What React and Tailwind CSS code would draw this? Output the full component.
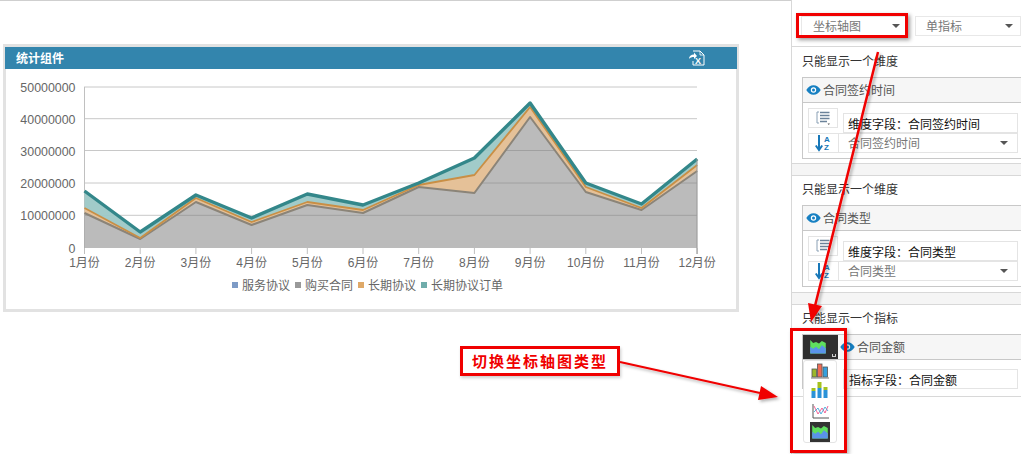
import React from "react";

const FONT = "[font-family:'Noto_Sans_CJK_SC','Liberation_Sans',sans-serif]";
const OX = 6;
const OY = 69;
const X = (i) => 84.5 - OX + i * 55.7;
const gray = [213, 239, 202, 225, 205, 213, 187, 193, 117, 192, 210, 171];
const orange = [208, 238, 198, 222, 202, 210, 185, 175, 107, 187, 208, 165];
const teal = [191, 232, 195, 218, 194, 205, 183, 158, 103, 183, 204, 159];
const pts = (a) => a.map((y, i) => `${X(i)},${y - OY}`).join(" ");
const area = (top, bottom) =>
  pts(top) + " " + [...bottom].reverse().map((y, i) => `${X(11 - i)},${y - OY}`).join(" ");
const base = gray.map(() => 248);
const ticks = ["50000000", "40000000", "30000000", "20000000", "10000000", "0"];
const tickY = [87, 118.7, 150.5, 183, 215.3, 248];
const months = ["1月份", "2月份", "3月份", "4月份", "5月份", "6月份", "7月份", "8月份", "9月份", "10月份", "11月份", "12月份"];

function Chart() {
  return (
    <svg width="730" height="207" className="block">
      {tickY.slice(0, 5).map((y) => (
        <line key={y} x1={84 - OX} x2={697 - OX} y1={y - OY} y2={y - OY} stroke="#c8c8c8" strokeWidth="1" />
      ))}
      <line x1={84.5 - OX} x2={84.5 - OX} y1={87 - OY} y2={248 - OY} stroke="#c0c0c0" />
      {months.map((m, i) => (
        <line key={m} x1={X(i)} x2={X(i)} y1={248 - OY} y2={254 - OY} stroke="#c0c0c0" />
      ))}
      <polygon points={area(teal, orange)} fill="#9cc8c6" fillOpacity="0.95" />
      <polygon points={area(orange, gray)} fill="#e5c198" />
      <polygon points={area(gray, base)} fill="#777" fillOpacity="0.5" />
      <polyline points={pts(gray)} fill="none" stroke="#8b8478" strokeWidth="2" strokeLinejoin="round" />
      <polyline points={pts(orange)} fill="none" stroke="#c98f45" strokeWidth="1.8" strokeLinejoin="round" />
      <polyline points={pts(teal)} fill="none" stroke="#33878a" strokeWidth="3.4" strokeLinejoin="round" />
      <line x1={697 - OX} x2={697 - OX} y1={159 - OY} y2={254 - OY} stroke="#999" />
      {tickY.map((y, i) => (
        <text key={y} x={75.5 - OX} y={y - OY + 5} textAnchor="end" fontSize="12.4" fill="#666" fontFamily="'Liberation Sans',sans-serif">
          {ticks[i]}
        </text>
      ))}
      {months.map((m, i) => (
        <text key={m} x={X(i)} y={267 - OY} textAnchor="middle" fontSize="12" fill="#666" fontFamily="'Liberation Sans','Noto Sans CJK SC',sans-serif">
          {m}
        </text>
      ))}
    </svg>
  );
}

function LegendItem({ color, label }) {
  return (
    <span className="flex items-center gap-[4px]">
      <span className="w-[6px] h-[6px]" style={{ backgroundColor: color }} />
      <span>{label}</span>
    </span>
  );
}

function Caret({ className = "" }) {
  return <span className={`w-0 h-0 border-x-[4px] border-x-transparent border-t-[4px] border-t-[#555] ${className}`} />;
}

function Eye() {
  return (
    <svg width="15" height="10" viewBox="0 0 15 10" className="shrink-0">
      <path d="M0.3 5C2 2 4.5 0.3 7.5 0.3S13 2 14.7 5C13 8 10.500 9.700 7.500 9.700S2 8 0.300 5Z" fill="#1780c2" />
      <circle cx="7.500" cy="5" r="2.700" fill="#fff" />
      <circle cx="7.500" cy="5" r="1.500" fill="#1780c2" />
    </svg>
  );
}

function ListIcon() {
  return (
    <svg width="15" height="14" viewBox="0 0 15 14">
      <path d="M3 1H1V12H3" fill="none" stroke="#8aa0b5" strokeWidth="1" />
      <path d="M4 1.500H13.500M4 4.500H13.500M4 7.500H13.500M4 10.500H11" stroke="#6b8299" strokeWidth="1.300" />
      <path d="M11.500 12.500H14L12.750 14Z" fill="#555" />
    </svg>
  );
}

function SortIcon() {
  return (
    <svg width="17" height="18" viewBox="0 0 17 18">
      <path d="M4 1V15M0.800 11.500L4 16L7.200 11.500" fill="none" stroke="#1878b8" strokeWidth="2" />
      <text x="9" y="7.500" fontSize="8" fontWeight="700" fill="#1878b8" fontFamily="'Liberation Sans',sans-serif">A</text>
      <text x="9" y="16" fontSize="8" fontWeight="700" fill="#1878b8" fontFamily="'Liberation Sans',sans-serif">Z</text>
    </svg>
  );
}

function AreaIcon({ size = 16 }) {
  return (
    <svg width={size} height={size * 0.85} viewBox="0 0 16 14">
      <polygon points="0,0 3,3 6,2 9,3.500 12,1 16,3 16,14 0,14" fill="#5fe05f" />
      <polygon points="0,7 3,9 6,7 9,9.500 12,5.500 16,8.500 16,14 0,14" fill="#5a93ea" />
    </svg>
  );
}

function DimensionBox({ title, sortField }) {
  return (
    <div className="ml-[10px] border border-r-0 border-[#c8c8c8]">
      <div className="h-[25px] flex items-center gap-[2px] pl-[3px] bg-[#f6f6f6] border-b border-[#c8c8c8] text-[12px] text-[#555]">
        <Eye />
        <span>{title}</span>
      </div>
      <div className="pl-[5px] pr-[3px] pt-[5px] pb-[4px] h-[55px]">
        <div className="flex h-[25px]">
          <div className="w-[30px] h-[20px] border border-[#e4e4e4] flex items-center justify-center">
            <ListIcon />
          </div>
          <div className="ml-[5px] flex-1 mt-[5px] h-[20px] border border-[#e4e4e4] pl-[4px] text-[12px] leading-[19px] text-[#111]">
            维度字段：{title}
          </div>
        </div>
        <div className="flex h-[20px] border border-[#e4e4e4] items-center">
          <div className="w-[30px] h-full border-r border-[#e4e4e4] flex items-center justify-center">
            <SortIcon />
          </div>
          <span className="ml-[9px] flex-1 text-[12px] text-[#777]">{sortField}</span>
          <Caret className="mr-[9px]" />
        </div>
      </div>
    </div>
  );
}

function Strip() {
  return <div className="h-[11px] bg-[#f5f5f5] border-y border-[#d8d8d8] box-content -my-px" />;
}

function Heading({ children }) {
  return <div className="pl-[10px] pt-[5px] h-[30px] text-[12px] leading-[18px] text-[#333]">{children}</div>;
}

function Dropdown() {
  return (
    <div className="absolute left-[803px] top-[360px] w-[34px] h-[83px] bg-white border border-[#e4e4e4] rounded-[3px] flex flex-col items-center pt-[2px] gap-[3px]">
      <svg width="18" height="16" viewBox="0 0 18 16">
        <rect x="1" y="6" width="4.500" height="8" fill="#9ab82a" stroke="#555" strokeWidth="0.800" />
        <rect x="6.500" y="1" width="4.500" height="13" fill="#ef6b55" stroke="#555" strokeWidth="0.800" />
        <rect x="12" y="4" width="4.500" height="10" fill="#35a0dd" stroke="#555" strokeWidth="0.800" />
        <path d="M0 15H18" stroke="#777" strokeWidth="1" />
      </svg>
      <svg width="18" height="16" viewBox="0 0 18 16">
        <rect x="0.500" y="9" width="4" height="7" fill="#2a92d8" />
        <rect x="0.500" y="6" width="4" height="3" fill="#a5c21e" />
        <rect x="6.500" y="6" width="4" height="10" fill="#2a92d8" />
        <rect x="6.500" y="0" width="4" height="6" fill="#a5c21e" />
        <rect x="12.500" y="8" width="4" height="8" fill="#2a92d8" />
        <rect x="12.500" y="5" width="4" height="3" fill="#a5c21e" />
      </svg>
      <svg width="17" height="16" viewBox="0 0 17 16" className="mt-[2px]">
        <path d="M1 1V15H17" fill="none" stroke="#555" strokeWidth="1" />
        <path d="M2 3L6 11L10 5L13 10L16 3" fill="none" stroke="#f0528a" strokeWidth="0.900" />
        <path d="M2 9L6 5L9 11L13 4L16 8" fill="none" stroke="#45a9d8" strokeWidth="0.900" />
      </svg>
      <div className="w-[20px] h-[20px] bg-[#333] flex items-center justify-center">
        <AreaIcon size={16} />
      </div>
    </div>
  );
}

export default function App() {
  return (
    <div className={`relative w-[1021px] h-[454px] overflow-hidden bg-white flex ${FONT}`}>
      <main className="w-[791px] h-full border-t border-[#cfcfcf] pt-[43px] pl-[3px]">
        <section className="w-[736px] h-[268px] border-[3px] border-[#e2e2e2] bg-white">
          <header className="h-[22px] -mx-px flex items-center justify-between pl-[11px] pr-[32px] bg-[#3385ad] text-white text-[12px] font-bold">
            <span>统计组件</span>
            <svg width="17" height="16" viewBox="0 0 17 16">
              <path d="M5 1H12L16 5V15H5V11" fill="none" stroke="#fff" strokeWidth="1" />
              <path d="M12 1V5H16" fill="none" stroke="#fff" strokeWidth="0.800" />
              <path d="M1 9C1 6 3 4.500 6 4.500V2.500L9 6L6 9V7C4 7 2 7.500 1 9Z" fill="#fff" />
              <text x="7" y="14" fontSize="9" fontWeight="700" fill="#fff" fontFamily="'Liberation Sans',sans-serif">X</text>
            </svg>
          </header>
          <Chart />
          <div className="ml-[226px] flex gap-[5px] text-[12px] leading-[18px] text-[#666]">
            <LegendItem color="#7d9bc6" label="服务协议" />
            <LegendItem color="#999999" label="购买合同" />
            <LegendItem color="#dfa968" label="长期协议" />
            <LegendItem color="#70adab" label="长期协议订单" />
          </div>
        </section>
      </main>

      <aside className="w-[230px] h-full border-l border-[#d8d8d8] flex flex-col">
        <div className="h-[47px] border-b border-[#d8d8d8] flex items-start pt-[16px] pl-[9px] pr-0 gap-[7px]">
          <div className="w-[107px] h-[20px] flex items-center justify-between border border-[#e8e8e8] pl-[11px] pr-[7px] text-[12px] text-[#777]">
            <span>坐标轴图</span>
            <Caret />
          </div>
          <div className="flex-1 h-[20px] flex items-center justify-between border border-[#e8e8e8] pl-[10px] pr-[7px] text-[12px] text-[#777]">
            <span>单指标</span>
            <Caret />
          </div>
        </div>
        <div className="h-[117px]">
          <Heading>只能显示一个维度</Heading>
          <DimensionBox title="合同签约时间" sortField="合同签约时间" />
        </div>
        <Strip />
        <div className="h-[118px]">
          <Heading>只能显示一个维度</Heading>
          <DimensionBox title="合同类型" sortField="合同类型" />
        </div>
        <Strip />
        <div className="h-[93px] border-b border-[#d8d8d8]">
          <Heading>只能显示一个指标</Heading>
          <div className="ml-[10px] border-t border-l border-[#c8c8c8]">
            <div className="h-[25px] flex items-center bg-[#f6f6f6] border-b border-[#c8c8c8] text-[12px] text-[#555]">
              <div className="relative w-[35px] h-full bg-[#2f2f2f] flex items-center justify-center pr-[6px]">
                <AreaIcon size={16} />
                <span className="absolute right-[2px] bottom-[2px] w-[4px] h-[3px] border-b border-x border-[#ccc]" />
              </div>
              <span className="ml-[2px]"><Eye /></span>
              <span className="ml-[2px]">合同金额</span>
            </div>
            <div className="pt-[9px] pl-[40px] pr-[3px]">
              <div className="h-[20px] border border-[#e4e4e4] pl-[5px] text-[12px] leading-[19px] text-[#111]">
                指标字段：合同金额
              </div>
            </div>
          </div>
        </div>
      </aside>

      <Dropdown />

      <div className="absolute left-[796px] top-[13px] w-[112px] h-[25px] border-[3px] border-[#f00000] shadow-[2px_2px_4px_rgba(0,0,0,0.4)]" />
      <div className="absolute left-[790px] top-[328px] w-[57px] h-[125px] border-[3px] border-[#f00000] shadow-[2px_2px_4px_rgba(0,0,0,0.3)]" />
      <div className="absolute left-[460px] top-[346px] w-[160px] h-[30px] border-[3px] border-[#f00000] bg-white flex items-center justify-center text-[#f00000] text-[15px] font-bold tracking-[2px] [font-family:'Noto_Sans_CJK_SC',serif] shadow-[1px_2px_3px_rgba(0,0,0,0.2)]">
        切换坐标轴图类型
      </div>

      <svg className="absolute inset-0 pointer-events-none" width="1021" height="454">
        <defs>
          <filter id="s" x="-20%" y="-20%" width="140%" height="140%">
            <feDropShadow dx="2" dy="2" stdDeviation="1.500" floodColor="#000" floodOpacity="0.3" />
          </filter>
        </defs>
        <g filter="url(#s)">
          <line x1="878" y1="52" x2="815" y2="306" stroke="#f00000" strokeWidth="2.500" />
          <polygon points="811,322 808,303 822,306" fill="#f00000" />
          <line x1="620" y1="362" x2="760" y2="393" stroke="#f00000" strokeWidth="2" />
          <polygon points="778,397 758,400 761,386" fill="#f00000" />
        </g>
      </svg>
    </div>
  );
}
